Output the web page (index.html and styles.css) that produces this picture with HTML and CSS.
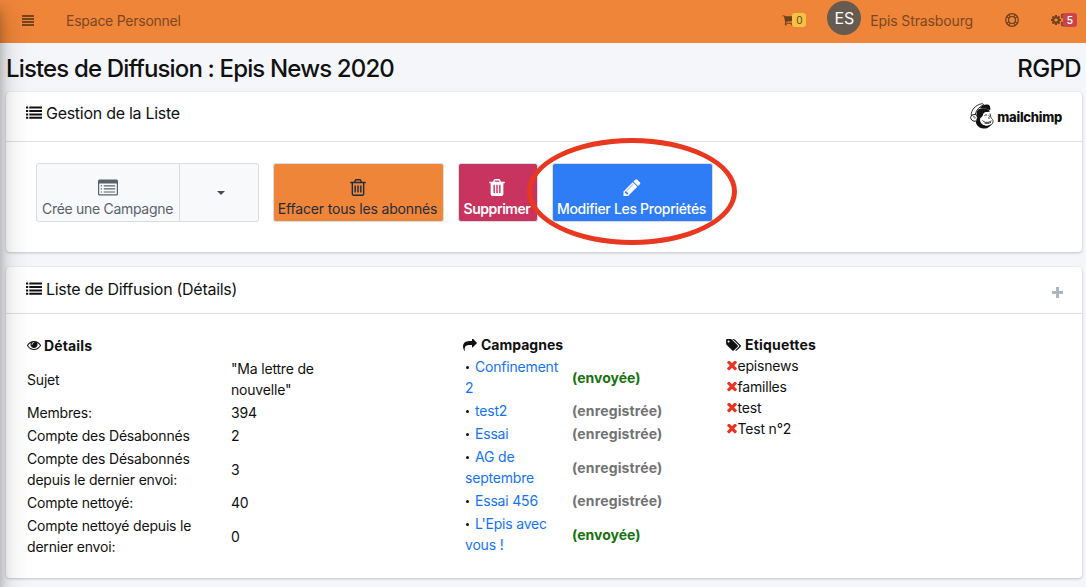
FILE: index.html
```html
<!DOCTYPE html>
<html lang="fr">
<head>
<meta charset="utf-8">
<title>Listes de Diffusion</title>
<link rel="stylesheet" href="styles.css">
</head>
<body>
<svg class="defs" width="0" height="0">
  <symbol id="list" viewBox="0 0 16 13"><path d="M0 .6h2.2v2H0zM0 4h2.2v2H0zM0 7.400h2.200v2H0zM0 10.800h2.200v2H0zM3.300.6H16v2H3.300zM3.300 4H16v2H3.300zM3.300 7.400H16v2H3.300zM3.300 10.800H16v2H3.300z"/></symbol>
  <symbol id="times" viewBox="290 420 1212 1212"><path d="M1490 1322q0 40-28 68l-136 136q-28 28-68 28t-68-28l-294-294-294 294q-28 28-68 28t-68-28l-136-136q-28-28-28-68t28-68l294-294-294-294q-28-28-28-68t28-68l136-136q28-28 68-28t68 28l294 294 294-294q28-28 68-28t68 28l136 136q28 28 28 68t-28 68l-294 294 294 294q28 28 28 68z"/></symbol>
  <symbol id="cog" viewBox="128 128 1536 1536"><path d="M1152 896q0-106-75-181t-181-75-181 75-75 181 75 181 181 75 181-75 75-181zm512-109v222q0 12-8 23t-20 13l-185 28q-19 54-39 91 35 50 107 138 10 12 10 25t-9 23q-27 37-99 108t-94 71q-12 0-26-9l-138-108q-44 23-91 38-16 136-29 186-7 28-36 28h-222q-14 0-24.500-8.500t-11.500-21.500l-28-184q-49-16-90-37l-141 107q-10 9-25 9-14 0-25-11-126-114-165-168-7-10-7-23 0-12 8-23 15-21 51-66.500t54-70.500q-27-50-41-99l-183-27q-13-2-21-12.500t-8-23.500v-222q0-12 8-23t19-13l186-28q14-46 39-92-40-57-107-138-10-12-10-24 0-10 9-23 26-36 98.500-107.500t94.500-71.500q13 0 26 10l138 107q44-23 91-38 16-136 29-186 7-28 36-28h222q14 0 24.500 8.500t11.500 21.500l28 184q49 16 90 37l142-107q9-9 24-9 13 0 25 10 129 119 165 170 7 8 7 22 0 12-8 23-15 21-51 66.500t-54 70.500q26 50 41 98l183 28q13 2 21 12.500t8 23.500z"/></symbol>
</svg>

<div class="sidebar-edge"></div>

<nav class="navbar">
  <svg class="nav-menu" viewBox="0 0 12 11"><path d="M0 .2h12v1.500H0zM0 3.200h12v1.500H0zM0 6.200h12v1.500H0zM0 9.200h12v1.500H0z"/></svg>
  <span class="nav-link">Espace Personnel</span>
  <div class="nav-right">
    <div class="cart">
      <svg viewBox="64 256 1664 1408"><path d="M704 1536q0 52-38 90t-90 38-90-38-38-90 38-90 90-38 90 38 38 90zm896 0q0 52-38 90t-90 38-90-38-38-90 38-90 90-38 90 38 38 90zm128-1088v512q0 24-16.500 42.500t-40.500 21.500l-1044 122q13 60 13 70 0 16-24 64h920q26 0 45 19t19 45-19 45-45 19h-1024q-26 0-45-19t-19-45q0-11 8-31.500t16-36 21.500-40 15.500-29.500l-177-823h-204q-26 0-45-19t-19-45 19-45 45-19h256q16 0 28.500 6.500t19.500 15.500 13 24.500 8 26 5.500 29.500 4.500 26h1201q26 0 45 19t19 45z"/></svg>
      <span class="badge badge-warning">0</span>
    </div>
    <div class="avatar">ES</div>
    <span class="nav-link user">Epis Strasbourg</span>
    <svg class="ring" viewBox="0 0 14 14"><g fill="none" stroke="currentColor"><circle cx="7" cy="7" r="6.300" stroke-width="1.200"/><circle cx="7" cy="7" r="3.500" stroke-width="1.200"/><path d="M3.500 1.500l1.900 2.600M1.500 3.500l2.600 1.900M10.500 1.500L8.600 4.100M12.500 3.500L9.900 5.400M3.500 12.500l1.900-2.600M1.500 10.500l2.600-1.900M10.500 12.500L8.600 9.900M12.500 10.500L9.900 8.600" stroke-width="1.100"/></g></svg>
    <div class="cogs">
      <svg viewBox="0 0 15 14"><use href="#cog" x="0" y="2" width="10" height="10"/><use href="#cog" x="9.500" y=".2" width="5.500" height="5.500"/><use href="#cog" x="9.500" y="8.200" width="5.500" height="5.500"/></svg>
      <span class="badge badge-danger">5</span>
    </div>
  </div>
</nav>

<main class="content">
  <header class="page-head">
    <h1>Listes de Diffusion : Epis News 2020</h1>
    <h1 class="rgpd">RGPD</h1>
  </header>

  <section class="card manage">
    <div class="card-header">
      <svg class="icon-list"><use href="#list"/></svg>
      <h2 class="t-manage">Gestion de la Liste</h2>
      <div class="mailchimp">
        <svg viewBox="0 0 24 26">
          <path d="M6.500 10C7 6 11 3.500 18.500 6.500L20 8.500l-2.500.5c-2 0-3.500.5-4 2-.8 2.500-2.300 3-3.300 4.500-.7 2 .3 5 3.300 6.300 3 1.200 6 .5 8.300-1.800-1 3.700-4.300 5.700-8.300 5.500C8.500 25.200 6 21.500 5.700 18.500L7 17z"/>
          <path d="M1.200 12.500C1 7 5.500 2 11.500.8c1-.2 2 .2 2 1.200C9.500 3.500 6.500 6.500 5.200 11.500z" fill="#fff" stroke="#111" stroke-width=".9"/>
          <path d="M10 5c2-3 6-4.300 9-3 1.200 1 1.600 3 1.200 5.300C17 5.500 13.500 5 10 5z"/>
          <path d="M3.700 11.700c2-.8 3.600.5 3.700 2.700.1 2.400-1.300 4-3.200 3.800C2.300 18 .6 16.300.7 14.500c.1-1.500 1.300-2.600 3-2.800z" fill="#fff" stroke="#111" stroke-width="1"/>
          <path d="M3 14c1.300-.8 2.400 0 2 1.500" fill="none" stroke="#111" stroke-width=".8"/>
          <path d="M13.500 10.500c2-2 5-1.300 6 .5l1.200 4c1.300 1.300 2.300 2 2 4-.4 2.200-3 3.600-6 3.500-3.500-.1-6-2-5.700-4.500.2-1.400 1.600-2 2-3.200z" fill="#fff"/>
          <path d="M20 10.500l1 4.300c1.400 1.200 2.300 2.300 2 4.200-.3 1.600-1.300 2.800-2.800 3.500" fill="none" stroke="#111" stroke-width=".8"/>
          <path d="M14.500 12.500c1-.8 2-.7 2.700-.1M18.800 12.300l.8 1.500M18 14.900l1.800.2M12.500 17.500c2.500 2.500 6 2.500 9 .2M14.500 20c2 .8 4.500.6 6.500-.7" fill="none" stroke="#111" stroke-width=".85"/>
        </svg>
        <span>mailchimp</span>
      </div>
    </div>
    <div class="actions">
      <div class="btn-group">
        <button class="btn btn-light create">
          <svg class="ico-alt" viewBox="0 0 20 16"><path fill-rule="evenodd" d="M1.500 0h17A1.500 1.500 0 0 1 20 1.500v13a1.500 1.500 0 0 1-1.500 1.500h-17A1.500 1.500 0 0 1 0 14.500v-13A1.500 1.500 0 0 1 1.500 0zM1.200 4v10.200c0 .4.200.6.600.6h16.400c.4 0 .6-.2.600-.6V4zM2.700 5.700H4v1.200H2.700zM2.700 8.800H4V10H2.700zM2.700 11.900H4v1.200H2.700zM5.700 5.700h11.500v1.200H5.700zM5.700 8.800h11.500V10H5.700zM5.700 11.900h11.500v1.200H5.700z"/></svg>
          <span class="l-create">Crée une Campagne</span>
        </button>
        <button class="btn btn-light toggle"><i class="caret"></i></button>
      </div>
      <button class="btn btn-orange">
        <svg class="ico-trash" viewBox="192 128 1408 1536"><path d="M704 736v576q0 14-9 23t-23 9h-64q-14 0-23-9t-9-23v-576q0-14 9-23t23-9h64q14 0 23 9t9 23zm256 0v576q0 14-9 23t-23 9h-64q-14 0-23-9t-9-23v-576q0-14 9-23t23-9h64q14 0 23 9t9 23zm256 0v576q0 14-9 23t-23 9h-64q-14 0-23-9t-9-23v-576q0-14 9-23t23-9h64q14 0 23 9t9 23zm128 724v-948h-896v948q0 22 7 40.500t14.500 27 10.500 8.500h832q3 0 10.500-8.500t14.500-27 7-40.500zm-672-1076h448l-48-117q-7-9-17-11h-317q-10 2-17 11zm928 32v64q0 14-9 23t-23 9h-96v948q0 83-47 143.500t-113 60.500h-832q-66 0-113-58.500t-47-141.500v-952h-96q-14 0-23-9t-9-23v-64q0-14 9-23t23-9h309l70-167q15-37 54-63t79-26h320q40 0 79 26t54 63l70 167h309q14 0 23 9t9 23z"/></svg>
        <span class="l-clear">Effacer tous les abonnés</span>
      </button>
      <button class="btn btn-red">
        <svg class="ico-trash" viewBox="192 128 1408 1536"><path d="M704 1376v-704q0-14-9-23t-23-9h-64q-14 0-23 9t-9 23v704q0 14 9 23t23 9h64q14 0 23-9t9-23zm256 0v-704q0-14-9-23t-23-9h-64q-14 0-23 9t-9 23v704q0 14 9 23t23 9h64q14 0 23-9t9-23zm256 0v-704q0-14-9-23t-23-9h-64q-14 0-23 9t-9 23v704q0 14 9 23t23 9h64q14 0 23-9t9-23zm-544-992h448l-48-117q-7-9-17-11h-317q-10 2-17 11zm928 32v64q0 14-9 23t-23 9h-96v948q0 83-47 143.500t-113 60.500h-832q-66 0-113-58.500t-47-141.500v-952h-96q-14 0-23-9t-9-23v-64q0-14 9-23t23-9h309l70-167q15-37 54-63t79-26h320q40 0 79 26t54 63l70 167h309q14 0 23 9t9 23z"/></svg>
        <span class="l-delete">Supprimer</span>
      </button>
      <div class="highlighted">
        <button class="btn btn-blue">
          <svg class="ico-pencil" viewBox="128 128 1536 1536"><path d="M491 1536l91-91-235-235-91 91v107h128v128h107zm523-928q0-22-22-22-10 0-17 7l-542 542q-7 7-7 17 0 22 22 22 10 0 17-7l542-542q7-7 7-17zm-54-192l416 416-832 832h-416v-416zm683 96q0 53-37 90l-166 166-416-416 166-165q36-38 90-38 53 0 91 38l235 234q37 39 37 91z"/></svg>
          <span class="l-edit">Modifier Les Propriétés</span>
        </button>
        <div class="annotation"></div>
      </div>
    </div>
  </section>

  <section class="card details">
    <div class="card-header">
      <svg class="icon-list"><use href="#list"/></svg>
      <h2 class="t-details">Liste de Diffusion (Détails)</h2>
      <i class="plus"></i>
    </div>
    <div class="columns">
      <div class="col-info">
        <h3 class="h-info"><svg viewBox="0 384 1792 1152"><path d="M1664 960q-152-236-381-353 61 104 61 225 0 185-131.500 316.500t-316.500 131.500-316.500-131.500-131.500-316.500q0-121 61-225-229 117-381 353 133 205 333.500 326.500t434.500 121.500 434.500-121.500 333.500-326.500zm-720-384q0-20-14-34t-34-14q-125 0-214.500 89.500t-89.500 214.500q0 20 14 34t34 14 34-14 14-34q0-86 61-147t147-61q20 0 34-14t14-34zm848 384q0 34-20 69-140 230-376.500 368.500t-499.500 138.500-499.500-139-376.500-368q-20-35-20-69t20-69q140-229 376.500-368t499.500-139 499.500 139 376.500 368q20 35 20 69z"/></svg><span>Détails</span></h3>
        <table class="info">
          <tr><td>Sujet</td><td>"Ma lettre de<br>nouvelle"</td></tr>
          <tr><td>Membres:</td><td>394</td></tr>
          <tr><td>Compte des Désabonnés</td><td>2</td></tr>
          <tr><td>Compte des Désabonnés<br>depuis le dernier envoi:</td><td>3</td></tr>
          <tr><td>Compte nettoyé:</td><td>40</td></tr>
          <tr><td>Compte nettoyé depuis le<br>dernier envoi:</td><td>0</td></tr>
        </table>
      </div>
      <div class="col-camp">
        <h3 class="h-camp"><svg viewBox="0 128 1792 1536"><path d="M1792 640q0 26-19 45l-512 512q-19 19-45 19t-45-19-19-45v-256h-224q-98 0-175.500 6t-154 21.500-133 42.500-105.500 69.500-80 101-48.500 138.500-17.500 181q0 55 5 123 0 6 2.500 23.500t2.500 26.500q0 15-8.500 25t-23.500 10q-16 0-28-17-7-9-13-22t-13.500-30-10.500-24q-127-285-127-451 0-199 53-333 162-403 875-403h224v-256q0-26 19-45t45-19 45 19l512 512q19 19 19 45z"/></svg><span>Campagnes</span></h3>
        <table class="camp">
          <tr><td><i class="dot"></i><a>Confinement<br>2</a></td><td class="sent">(envoyée)</td></tr>
          <tr><td><i class="dot"></i><a>test2</a></td><td class="saved">(enregistrée)</td></tr>
          <tr><td><i class="dot"></i><a>Essai</a></td><td class="saved">(enregistrée)</td></tr>
          <tr><td><i class="dot"></i><a>AG de<br>septembre</a></td><td class="saved">(enregistrée)</td></tr>
          <tr><td><i class="dot"></i><a>Essai 456</a></td><td class="saved">(enregistrée)</td></tr>
          <tr><td><i class="dot"></i><a>L'Epis avec<br>vous !</a></td><td class="sent">(envoyée)</td></tr>
        </table>
      </div>
      <div class="col-tags">
        <h3 class="h-tags"><svg viewBox="0 128 1899 1536"><path d="M448 448q0-53-37.500-90.500t-90.500-37.500-90.500 37.500-37.500 90.500 37.500 90.500 90.500 37.500 90.500-37.500 37.500-90.500zm1067 576q0 53-37 90l-491 492q-39 37-91 37-53 0-90-37l-715-716q-38-37-64.500-101t-26.500-117v-416q0-52 38-90t90-38h416q53 0 117 26.500t102 64.500l715 714q37 39 37 91zm384 0q0 53-37 90l-491 492q-39 37-91 37-36 0-59-14t-53-45l470-470q37-37 37-90 0-52-37-91l-715-714q-38-38-102-64.500t-117-26.500h224q53 0 117 26.500t102 64.500l715 714q37 39 37 91z"/></svg><span>Etiquettes</span></h3>
        <ul class="tags">
          <li><svg><use href="#times"/></svg>episnews</li>
          <li><svg><use href="#times"/></svg>familles</li>
          <li><svg><use href="#times"/></svg>test</li>
          <li><svg><use href="#times"/></svg>Test n°2</li>
        </ul>
      </div>
    </div>
  </section>
</main>
</body>
</html>
```
FILE: styles.css
```css
* { box-sizing: border-box; }
html, body { margin: 0; height: 587px; overflow: hidden; }
body {
  position: relative;
  background: #f4f6f9;
  color: #111;
  font: 14px/21px Inter, "Liberation Sans", sans-serif;
  letter-spacing: -.19px;
}
svg { display: block; fill: currentColor; flex: none; }
.defs { position: absolute; }
h1, h2, h3 { margin: 0; font-weight: 400; white-space: nowrap; }

/* shadow cast by the off-canvas sidebar */
.sidebar-edge {
  position: absolute;
  z-index: 5;
  top: 0;
  left: -250px;
  width: 250px;
  height: 587px;
  box-shadow: 0 14px 28px rgba(0,0,0,.25), 0 10px 10px rgba(0,0,0,.22);
}

.navbar {
  height: 43px;
  display: flex;
  align-items: center;
  padding: 0 9px 3px 22px;
  background: #ee8539;
  color: #6f401d;
}
.nav-menu { width: 12px; height: 11px; color: #502f16; }
.nav-link { margin-left: 32px; color: #7c4821; letter-spacing: -.25px; }
.nav-right { margin-left: auto; display: flex; align-items: center; }
.cart, .cogs { display: flex; align-items: center; }
.cart svg { width: 12px; height: 11px; }
.badge {
  height: 14px;
  border-radius: 3px;
  font-size: 10px;
  line-height: 14px;
  text-align: center;
  letter-spacing: 0;
}
.badge-warning { width: 14px; margin-left: -2px; background: #f6c244; color: #5c4a1c; }
.badge-danger { width: 14px; margin-left: -3px; background: #cb444a; color: #fff; font-weight: 600; }
.avatar {
  width: 34px;
  height: 34px;
  margin: 0 0 4px 21px;
  border-radius: 50%;
  background: #675a50;
  color: #fff;
  font-size: 16px;
  line-height: 34px;
  text-align: center;
}
.user { margin-left: 9px; letter-spacing: -.13px; }
.ring { width: 14px; height: 14px; margin: 0 32px; }
.cogs svg { width: 15px; height: 14px; }

.content { padding: 0 4px 0 6px; }
.page-head {
  height: 49px;
  display: flex;
  justify-content: space-between;
  align-items: center;
}
.page-head h1 { font-size: 24px; font-weight: 450; line-height: 30px; margin-top: 3px; letter-spacing: -.85px; }
.page-head .rgpd { letter-spacing: -.6px; margin-right: 1px; }

.card {
  background: #fff;
  border-radius: 4px;
  box-shadow: 0 0 1px rgba(0,0,0,.125), 0 1px 3px rgba(0,0,0,.2);
}
.manage { height: 160px; margin-bottom: 15px; }
.details { height: 311px; }
.card-header {
  display: flex;
  border-bottom: 1px solid #dfdfdf;
  padding: 0 20px;
}
.manage .card-header { height: 50px; padding-top: 11px; }
.details .card-header { height: 47px; padding-top: 12px; }
.icon-list { width: 16px; height: 13px; margin-top: 3px; }
h2 { font-size: 16px; line-height: 20px; margin-left: 4px; letter-spacing: -.28px; }
.mailchimp { margin-left: auto; display: flex; }
.mailchimp svg { width: 24px; height: 26px; }
.mailchimp span { margin: 4px 0 0 3px; font-size: 13px; font-weight: 800; letter-spacing: -.27px; }
.plus {
  width: 11px;
  height: 11px;
  margin: 8px -1px 0 auto;
  background: linear-gradient(#adb5bd, #adb5bd) center / 11px 3px no-repeat, linear-gradient(#adb5bd, #adb5bd) center / 3px 11px no-repeat;
}

.actions { display: flex; padding: 20.500px 0 0 30px; }
.btn {
  display: flex;
  flex-direction: column;
  align-items: center;
  height: 59px;
  padding: 15px 0 0;
  border: 1px solid #dadde0;
  border-radius: 3px;
  font: inherit;
  letter-spacing: -.3px;
  white-space: nowrap;
}
.btn svg { height: 17px; margin-left: -1px; }
.btn span { margin: 2px 0 0 -1px; }
.btn-group { display: flex; }
.btn-light { background: #f8f9fa; color: #59626b; }
.create { width: 144px; border-radius: 3px 0 0 3px; }
.toggle { width: 79px; border-left: 0; border-radius: 0 3px 3px 0; padding-top: 27px; margin-right: 13.500px; }
.toggle .caret { margin-left: 4px; border: 4px solid transparent; border-top-color: #444d55; border-bottom: 0; }
.ico-alt { width: 20px; }
.ico-trash { width: 16px; }
.ico-pencil { width: 18px; }
.btn-orange { width: 171px; background: #ee8539; color: #1f2d3d; margin-right: 14px; letter-spacing: -.17px; }
.btn-red { width: 80px; background: #c8335f; color: #fff; font-weight: 600; margin-right: 14px; letter-spacing: -.45px; }
.btn-blue { width: 161px; background: #2f7df6; color: #fff; font-weight: 500; }
.highlighted { position: relative; }
.annotation {
  position: absolute;
  left: -24.500px;
  top: -24.500px;
  width: 210px;
  height: 107px;
  border: 5px solid #e93820;
  border-radius: 50%;
}

.columns { display: flex; padding: 20px 0 0 20px; }
h3 { display: flex; align-items: center; height: 21px; font-size: 14px; font-weight: 700; letter-spacing: 0; }
h3 svg { width: 14px; height: 12px; margin-right: 4px; }
.col-info { width: 437px; padding: 1px 0 0 1px; }
.h-info { letter-spacing: .15px; }
.h-info svg { height: 9px; margin-right: 3px; }
.h-tags { letter-spacing: .2px; }
.h-tags svg { width: 15px; }
.col-camp { width: 263px; }
table { border-collapse: collapse; }
td { padding: 1px 0; height: 23px; vertical-align: middle; white-space: nowrap; }
.info { margin-top: 1px; }
.info td:first-child { width: 204px; }
.camp { margin-left: 2px; }
.camp td:first-child { width: 107px; }
.camp a { color: #1473f5; }
.dot { display: inline-block; width: 3px; height: 3px; margin: 0 6px 3px 1px; border-radius: 50%; background: #111; }
.camp .sent { font-weight: 700; letter-spacing: 0; }
.camp .saved { font-weight: 700; letter-spacing: .14px; }
.sent { color: #16720f; }
.saved { color: #737373; }
.tags { list-style: none; margin: 0; padding: 0 0 0 1px; }
.tags li { display: flex; align-items: center; }
.tags svg { width: 10px; height: 10px; margin-right: .5px; color: #e93323; }
```
